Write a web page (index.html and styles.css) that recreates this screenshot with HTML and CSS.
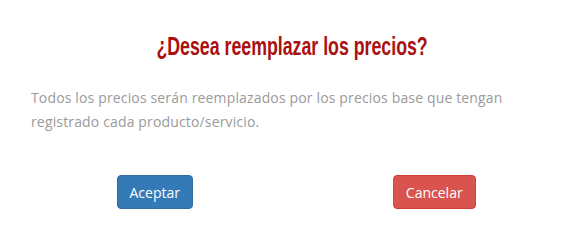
FILE: index.html
```html
<!DOCTYPE html>
<html lang="es">
<head>
    <meta charset="UTF-8">
    <title>Reemplazar precios</title>
    <link rel="stylesheet" href="styles.css">
</head>
<body>
    <div class="modal">
        <h2 class="modal-title"><span class="title-text">¿Desea reemplazar los precios?</span></h2>
        <p class="modal-text">Todos los precios serán reemplazados por los precios base que tengan registrado cada producto/servicio.</p>
        <div class="modal-actions">
            <div class="action"><button class="btn btn-primary">Aceptar</button></div>
            <div class="action"><button class="btn btn-danger">Cancelar</button></div>
        </div>
    </div>
</body>
</html>
```

FILE: styles.css
```css
* {
    margin: 0;
    padding: 0;
    box-sizing: border-box;
}

body {
    background: #ffffff;
    font-family: 'Open Sans', sans-serif;
}

.modal {
    width: 584px;
    height: 238px;
    padding: 30px 0 0 0;
}

.modal-title {
    font-family: 'Liberation Sans', sans-serif;
    font-weight: bold;
    font-size: 25px;
    line-height: 32px;
    color: #a9100f;
    text-align: center;
}

/* no condensed face installed, so squeeze it */
.title-text {
    display: inline-block;
    transform: scaleX(0.71);
}

.modal-text {
    margin-top: 24px;
    padding: 0 40px 0 31px;
    font-size: 14px;
    line-height: 24px;
    letter-spacing: 0.15px;
    color: #9a9a9a;
}

.modal-actions {
    display: grid;
    grid-template-columns: 1fr 1fr;
    padding: 0 10px 0 15px;
    margin-top: 41px;
}

.action {
    text-align: center;
}

.btn {
    font-family: 'Open Sans', sans-serif;
    font-size: 14px;
    color: #ffffff;
    height: 34px;
    padding: 0 12px;
    border-radius: 4px;
    border: 1px solid transparent;
    cursor: pointer;
}

.btn-primary {
    background: #337ab7;
    border-color: #2e6da4;
}

.btn-danger {
    background: #d9534f;
    border-color: #d43f3a;
}
```
